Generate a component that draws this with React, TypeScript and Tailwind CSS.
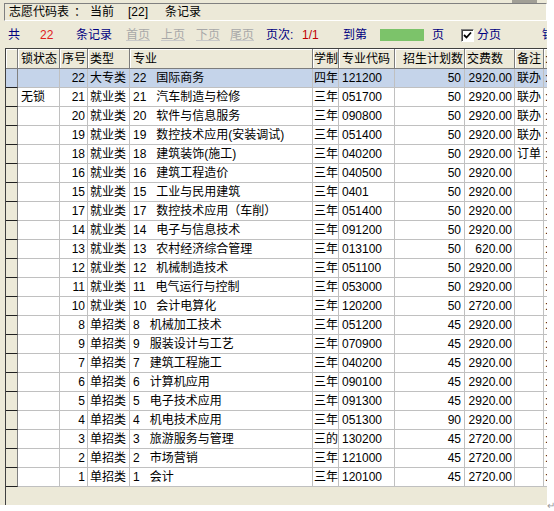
import React from 'react';

type Row = {
  lock: string;
  no: string;
  kind: string;
  num: string;
  name: string;
  years: string;
  code: string;
  plan: string;
  fee: string;
  note: string;
};

const rows: Row[] = [
  { lock: '', no: '22', kind: '大专类', num: '22', name: '国际商务', years: '四年', code: '121200', plan: '50', fee: '2920.00', note: '联办' },
  { lock: '无锁', no: '21', kind: '就业类', num: '21', name: '汽车制造与检修', years: '三年', code: '051700', plan: '50', fee: '2920.00', note: '联办' },
  { lock: '', no: '20', kind: '就业类', num: '20', name: '软件与信息服务', years: '三年', code: '090800', plan: '50', fee: '2920.00', note: '联办' },
  { lock: '', no: '19', kind: '就业类', num: '19', name: '数控技术应用(安装调试)', years: '三年', code: '051400', plan: '50', fee: '2920.00', note: '联办' },
  { lock: '', no: '18', kind: '就业类', num: '18', name: '建筑装饰(施工)', years: '三年', code: '040200', plan: '50', fee: '2920.00', note: '订单' },
  { lock: '', no: '16', kind: '就业类', num: '16', name: '建筑工程造价', years: '三年', code: '040500', plan: '50', fee: '2920.00', note: '' },
  { lock: '', no: '15', kind: '就业类', num: '15', name: '工业与民用建筑', years: '三年', code: '0401', plan: '50', fee: '2920.00', note: '' },
  { lock: '', no: '17', kind: '就业类', num: '17', name: '数控技术应用（车削）', years: '三年', code: '051400', plan: '50', fee: '2920.00', note: '' },
  { lock: '', no: '14', kind: '就业类', num: '14', name: '电子与信息技术', years: '三年', code: '091200', plan: '50', fee: '2920.00', note: '' },
  { lock: '', no: '13', kind: '就业类', num: '13', name: '农村经济综合管理', years: '三年', code: '013100', plan: '50', fee: '620.00', note: '' },
  { lock: '', no: '12', kind: '就业类', num: '12', name: '机械制造技术', years: '三年', code: '051100', plan: '50', fee: '2920.00', note: '' },
  { lock: '', no: '11', kind: '就业类', num: '11', name: '电气运行与控制', years: '三年', code: '053000', plan: '50', fee: '2920.00', note: '' },
  { lock: '', no: '10', kind: '就业类', num: '10', name: '会计电算化', years: '三年', code: '120200', plan: '50', fee: '2720.00', note: '' },
  { lock: '', no: '8', kind: '单招类', num: '8', name: '机械加工技术', years: '三年', code: '051200', plan: '45', fee: '2920.00', note: '' },
  { lock: '', no: '9', kind: '单招类', num: '9', name: '服装设计与工艺', years: '三年', code: '070900', plan: '45', fee: '2920.00', note: '' },
  { lock: '', no: '7', kind: '单招类', num: '7', name: '建筑工程施工', years: '三年', code: '040200', plan: '45', fee: '2920.00', note: '' },
  { lock: '', no: '6', kind: '单招类', num: '6', name: '计算机应用', years: '三年', code: '090100', plan: '45', fee: '2920.00', note: '' },
  { lock: '', no: '5', kind: '单招类', num: '5', name: '电子技术应用', years: '三年', code: '091300', plan: '45', fee: '2920.00', note: '' },
  { lock: '', no: '4', kind: '单招类', num: '4', name: '机电技术应用', years: '三年', code: '051300', plan: '90', fee: '2920.00', note: '' },
  { lock: '', no: '3', kind: '单招类', num: '3', name: '旅游服务与管理', years: '三的', code: '130200', plan: '45', fee: '2720.00', note: '' },
  { lock: '', no: '2', kind: '单招类', num: '2', name: '市场营销', years: '三年', code: '121000', plan: '45', fee: '2720.00', note: '' },
  { lock: '', no: '1', kind: '单招类', num: '1', name: '会计', years: '三年', code: '120100', plan: '45', fee: '2720.00', note: '' },
];

const font = { fontFamily: '"Liberation Sans", "Noto Sans CJK SC", sans-serif' };

// header cell: grey face, dark separators
const hd = 'h-full shrink-0 overflow-hidden whitespace-nowrap border-r border-[#7c7c7c] shadow-[inset_1px_1px_0_#ffffff] flex items-center';
// data cell: white with light grid lines
const td = 'h-full shrink-0 overflow-hidden whitespace-nowrap border-r border-b border-[#c0c0c0] flex items-center';
const off = 'shrink-0 text-[#a8a8a8] underline decoration-[#c8c8c8]';

const Checkbox = () => (
  <div className="shrink-0 w-[13px] h-[13px] bg-white border border-t-[#808080] border-l-[#808080] border-b-[#ffffff] border-r-[#ffffff] shadow-[inset_1px_1px_0_#404040] flex items-center justify-center">
    <svg width="9" height="9" viewBox="0 0 9 9">
      <path d="M1 4 L3.5 6.5 L8 1.5" stroke="#000" strokeWidth="1.8" fill="none" />
    </svg>
  </div>
);

export default function App() {
  return (
    <div className="w-[554px] h-[511px] bg-white flex text-[12px] text-black" style={font}>
      <div className="w-[547px] h-[505px] bg-[#ece9d8] flex flex-col overflow-hidden">
        {/* top strip */}
        <div className="h-[3px] flex justify-end">
          <div className="w-[25px] h-full bg-[#a19f96] mr-[10px]" />
        </div>

        {/* title panel */}
        <div className="ml-[4px] h-[18px] border-t border-l border-[#808080] border-b border-r border-b-white border-r-white flex items-center pl-[4px] whitespace-nowrap">
          <span className="shrink-0 w-[65px]">志愿代码表</span>
          <span className="shrink-0 w-[16px]">：</span>
          <span className="shrink-0 w-[38px]">当前</span>
          <span className="shrink-0 w-[37px]">[22]</span>
          <span className="shrink-0">条记录</span>
        </div>

        {/* toolbar */}
        <div className="mt-[3px] h-[22px] flex items-center pl-[8px] whitespace-nowrap overflow-hidden text-[#000080]">
          <span className="shrink-0 w-[32px]">共</span>
          <span className="shrink-0 w-[36px] text-[#e02020]">22</span>
          <span className="shrink-0 w-[50px]">条记录</span>
          <span className={`${off} w-[35px]`}>首页</span>
          <span className={`${off} w-[35px]`}>上页</span>
          <span className={`${off} w-[34px]`}>下页</span>
          <span className={`${off} w-[36px]`}>尾页</span>
          <span className="shrink-0 w-[36px]">页次:</span>
          <span className="shrink-0 w-[41px] text-[#c00000]">1/1</span>
          <span className="shrink-0 w-[37px]">到第</span>
          <div className="shrink-0 w-[44px] h-[12px] bg-[#7cc36a] mr-[8px]" />
          <span className="shrink-0 w-[29px]">页</span>
          <Checkbox />
          <span className="shrink-0 w-[65px] ml-[3px]">分页</span>
          <span className="shrink-0">铂</span>
        </div>

        {/* grid */}
        <div className="mt-[2px] ml-[5px] flex-1 border-l border-t border-[#404040] flex flex-col overflow-hidden">
          <div className="h-[20px] shrink-0 flex bg-[#ece9d8] border-b border-[#7c7c7c]">
            <div className={`${hd} w-[12px]`} />
            <div className={`${hd} w-[42px] pl-[3px]`}>锁状态</div>
            <div className={`${hd} w-[28px] pl-[2px]`}>序号</div>
            <div className={`${hd} w-[42px] pl-[2px]`}>类型</div>
            <div className={`${hd} w-[183px] pl-[3px]`}>专业</div>
            <div className={`${hd} w-[26px] pl-[1px]`}>学制</div>
            <div className={`${hd} w-[56px] pl-[3px]`}>专业代码</div>
            <div className={`${hd} w-[70px] pl-[8px]`}>招生计划数</div>
            <div className={`${hd} w-[50px] pl-[2px]`}>交费数</div>
            <div className={`${hd} w-[29px] pl-[2px]`}>备注</div>
            <div className={`${hd} w-[40px] pl-[1px]`}>:</div>
          </div>

          {rows.map((r, i) => {
            const sel = i === 0;
            return (
              <div key={i} className={`h-[19px] shrink-0 flex ${sel ? 'bg-[#c5d4ea]' : 'bg-white'}`}>
                <div className={`h-full w-[12px] shrink-0 border-r border-[#808080] border-b border-b-[#202020] ${sel ? 'bg-[#c5d4ea]' : 'bg-[#ece9d8]'}`} />
                <div className={`${td} w-[42px] pl-[3px]`}>{r.lock}</div>
                <div className={`${td} w-[28px] justify-end pr-[2px]`}>{r.no}</div>
                <div className={`${td} w-[42px] pl-[2px]`}>{r.kind}</div>
                <div className={`${td} w-[183px] pl-[3px] gap-[10px]`}>
                  <span>{r.num}</span>
                  <span>{r.name}</span>
                </div>
                <div className={`${td} w-[26px] pl-[1px]`}>{r.years}</div>
                <div className={`${td} w-[56px] pl-[3px]`}>{r.code}</div>
                <div className={`${td} w-[70px] justify-end pr-[3px]`}>{r.plan}</div>
                <div className={`${td} w-[50px] justify-end pr-[2px]`}>{r.fee}</div>
                <div className={`${td} w-[29px] pl-[2px]`}>{r.note}</div>
                <div className={`${td} w-[40px] pl-[1px]`}>:</div>
              </div>
            );
          })}
        </div>
      </div>

      <div className="w-[7px] flex items-end">
        <span className="text-[10px] leading-none text-[#9a9a9a] mb-[0px]">↵</span>
      </div>
    </div>
  );
}
